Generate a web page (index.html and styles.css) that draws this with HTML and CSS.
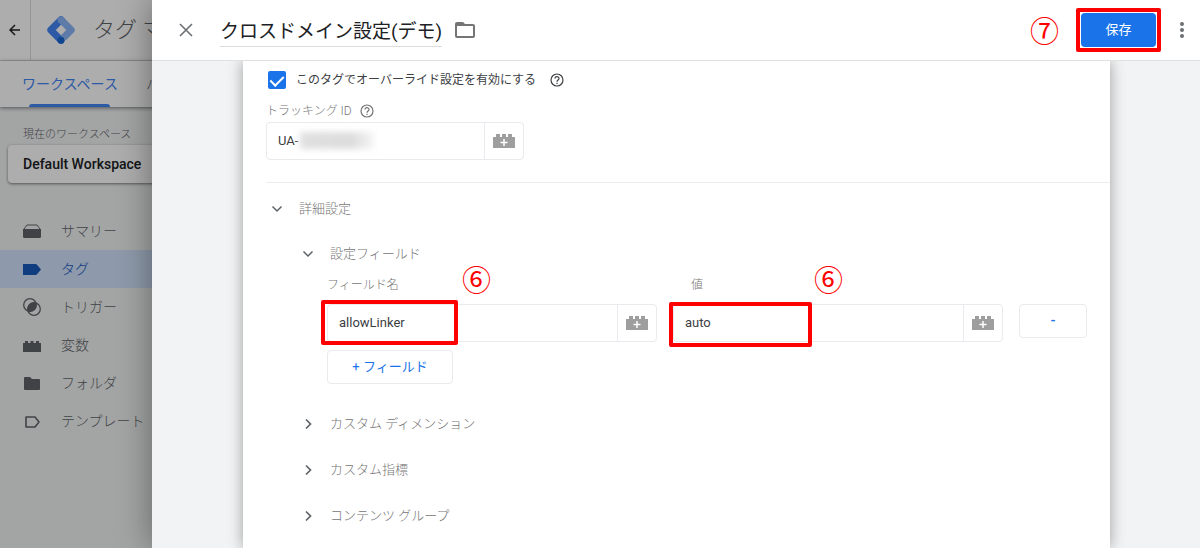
FILE: index.html
```html
<!DOCTYPE html>
<html lang="ja">
  <head>
    <meta charset="UTF-8" />
    <meta name="viewport" content="width=device-width, initial-scale=1.0" />
    <title>タグ マネージャー</title>
    <link rel="stylesheet" href="styles.css">
  </head>
  <body>
    <svg class="sprite" aria-hidden="true">
      <symbol id="brick" viewBox="0 0 22 14">
        <path fill="#9e9e9e" d="M0 3h3V0h4v3h2V0h4v3h2V0h4v3h3v11H0z" />
        <path fill="none" stroke="#fff" stroke-width="1.5" d="M11 5v7M7.500 8.500h7" />
      </symbol>
      <symbol id="help" viewBox="0 0 14 14">
        <circle cx="7" cy="7" r="6" fill="none" stroke="currentColor" stroke-width="1.200" />
        <path fill="none" stroke="currentColor" stroke-width="1.200" d="M5 5.600C5 3 9 3 9 5.500C9 7 7 7 7 8.700M7 9.700v1.300" />
      </symbol>
      <symbol id="down" viewBox="0 0 12 12">
        <path fill="none" stroke="#5f6368" stroke-width="1.500" d="M1.500 3.500L6 8L10.500 3.500" />
      </symbol>
      <symbol id="right" viewBox="0 0 12 12">
        <path fill="none" stroke="#5f6368" stroke-width="1.700" d="M4 1.500L8.500 6L4 10.500" />
      </symbol>
    </svg>

    <div class="app">
      <header class="app-header">
        <button class="back" aria-label="戻る">
          <svg width="12" height="12" viewBox="0 0 12 12"><path fill="none" stroke="#202124" stroke-width="1.500" d="M11 6H1.500M6 1L1 6l5 5" /></svg>
        </button>
        <svg class="logo" width="28" height="28" viewBox="0 0 28 28" fill="none" stroke-width="7" stroke-linecap="round" stroke-linejoin="round">
          <path stroke="#4285f4" d="M14 3.800L3.800 14L14 24.200" />
          <path stroke="#8ab4f8" d="M14 3.800L24.200 14L16.500 21.700" stroke-linecap="butt" />
          <circle cx="14" cy="3.800" r="3.500" fill="#8ab4f8" stroke="none" />
          <circle cx="14" cy="24.200" r="3.500" fill="#1967d2" stroke="none" />
        </svg>
        <span class="product">タグ マネージャー</span>
      </header>
      <nav class="tabs">
        <a class="tab active" href="#">ワークスペース</a>
        <a class="tab" href="#">バージョン</a>
      </nav>
      <aside class="sidebar">
        <p class="workspace-label">現在のワークスペース</p>
        <button class="workspace">Default Workspace</button>
        <nav class="menu">
          <a class="menu-item" href="#">
            <svg width="18" height="18" viewBox="0 0 18 18"><path d="M0 7h18v7.500q0 1.500-1.500 1.500h-15Q0 16 0 14.500z" /><path fill="none" stroke="#5f6368" d="M1 7l3-4h10l3 4" /></svg>
            サマリー
          </a>
          <a class="menu-item active" href="#">
            <svg width="18" height="18" viewBox="0 0 18 18"><path d="M0 4h12.500q1 0 1.500.700L18 9.500l-4 4.800q-.500.700-1.500.700H0z" /></svg>
            タグ
          </a>
          <a class="menu-item" href="#">
            <svg width="18" height="18" viewBox="0 0 18 18"><circle cx="7" cy="7" r="6.300" fill="none" stroke="#5f6368" stroke-width="1.300" /><circle cx="11" cy="11" r="6.300" fill="none" stroke="#5f6368" stroke-width="1.300" /><path d="M13.300 5.200A6.300 6.300 0 0 0 4.700 12.800A6.300 6.300 0 0 0 13.300 5.200z" /></svg>
            トリガー
          </a>
          <a class="menu-item" href="#">
            <svg width="18" height="18" viewBox="0 0 18 18"><path d="M0 7h2V5h3v2h2.500V5h3v2H13V5h3v2h2v9H0z" /></svg>
            変数
          </a>
          <a class="menu-item" href="#">
            <svg width="18" height="18" viewBox="0 0 18 18"><path d="M1 4q0-1 1-1h5l2 2h7q1 0 1 1v9q0 1-1 1H2q-1 0-1-1z" /></svg>
            フォルダ
          </a>
          <a class="menu-item" href="#">
            <svg width="18" height="18" viewBox="0 0 18 18"><path fill="none" stroke="#5f6368" stroke-width="1.600" stroke-linejoin="round" d="M3 5h9l4 5l-4 5H3z" /></svg>
            テンプレート
          </a>
        </nav>
      </aside>
    </div>
    <div class="scrim"></div>

    <section class="sheet">
      <header class="sheet-header">
        <button class="icon-button close" aria-label="閉じる">
          <svg width="14" height="14" viewBox="0 0 14 14"><path fill="none" stroke="#6b6f73" stroke-width="1.600" d="M1 1l12 12M13 1L1 13" /></svg>
        </button>
        <input class="title" type="text" aria-label="タグ名" value="クロスドメイン設定(デモ)" />
        <button class="icon-button" aria-label="フォルダ">
          <svg width="20" height="16" viewBox="0 0 20 16"><path fill="#757575" fill-rule="evenodd" d="M2 0h6l2 2h8q2 0 2 2v10q0 2-2 2H2q-2 0-2-2V2Q0 0 2 0zM2 4v10h16V4z" /></svg>
        </button>
        <span class="step step-save">⑦</span>
        <div class="callout-anchor">
          <button class="save">保存</button>
          <span class="callout callout-save"></span>
        </div>
        <button class="icon-button more" aria-label="その他">
          <svg width="4" height="16" viewBox="0 0 4 16" fill="#6b6f73"><circle cx="2" cy="2" r="2" /><circle cx="2" cy="8" r="2" /><circle cx="2" cy="14" r="2" /></svg>
        </button>
      </header>

      <div class="sheet-body">
        <main class="card">
          <div class="row override">
            <input class="check" type="checkbox" id="override" checked />
            <label for="override">このタグでオーバーライド設定を有効にする</label>
            <svg class="help" width="14" height="14"><use href="#help" /></svg>
          </div>
          <div class="row tracking-label">
            <label for="tracking">トラッキング ID</label>
            <svg class="help" width="14" height="14"><use href="#help" /></svg>
          </div>
          <div class="field tracking">
            <input type="text" id="tracking" value="UA-" />
            <span class="redacted"></span>
            <button aria-label="変数を選択"><svg width="22" height="14"><use href="#brick" /></svg></button>
          </div>

          <div class="advanced">
            <button class="row toggle" aria-expanded="true">
              <svg width="12" height="12"><use href="#down" /></svg>詳細設定
            </button>
            <div class="groups">
              <button class="row toggle" aria-expanded="true">
                <svg width="12" height="12"><use href="#down" /></svg>設定フィールド
              </button>
              <div class="fields">
                <div class="cell">
                  <label for="name">フィールド名</label>
                  <div class="field">
                    <input type="text" id="name" value="allowLinker" />
                    <button aria-label="変数を選択"><svg width="22" height="14"><use href="#brick" /></svg></button>
                  </div>
                  <span class="step step-name">⑥</span>
                  <span class="callout callout-name"></span>
                </div>
                <div class="cell">
                  <label class="value-label" for="value">値</label>
                  <div class="field">
                    <input type="text" id="value" value="auto" />
                    <button aria-label="変数を選択"><svg width="22" height="14"><use href="#brick" /></svg></button>
                  </div>
                  <span class="step step-value">⑥</span>
                  <span class="callout callout-value"></span>
                </div>
                <button class="outlined remove">-</button>
              </div>
              <button class="outlined add">+ フィールド</button>
              <div class="collapsed">
                <button class="row toggle" aria-expanded="false">
                  <svg width="12" height="12"><use href="#right" /></svg>カスタム ディメンション
                </button>
                <button class="row toggle" aria-expanded="false">
                  <svg width="12" height="12"><use href="#right" /></svg>カスタム指標
                </button>
                <button class="row toggle" aria-expanded="false">
                  <svg width="12" height="12"><use href="#right" /></svg>コンテンツ グループ
                </button>
              </div>
            </div>
          </div>
        </main>
      </div>
    </section>
  </body>
</html>
```

FILE: styles.css
```css
* {
  box-sizing: border-box;
}

body {
  margin: 0;
  height: 100vh;
  position: relative;
  overflow: hidden;
  font-family: Roboto, "Noto Sans CJK JP", sans-serif;
  font-size: 13px;
  font-weight: 300;
  line-height: 20px;
  color: #3c4043;
  background-color: #f1f3f4;
}

button,
input {
  font: inherit;
  color: inherit;
  margin: 0;
  padding: 0;
  border: none;
  background: none;
}

button {
  cursor: pointer;
}

a {
  color: inherit;
  text-decoration: none;
}

svg {
  display: block;
  flex: none;
}

.sprite {
  display: none;
}

/* page behind the sheet */
.app-header {
  display: flex;
  align-items: center;
  height: 61px;
  background-color: #fff;
  border-bottom: 1px solid #dadce0;
}

.back {
  display: flex;
  align-items: center;
  justify-content: center;
  align-self: stretch;
  width: 31px;
  border-right: 1px solid #dadce0;
}

.logo {
  margin-left: 16px;
}

.product {
  margin-left: 18px;
  font-size: 22px;
  line-height: 28px;
  color: #5f6368;
  white-space: nowrap;
}

.tabs {
  display: flex;
  gap: 28px;
  height: 46px;
  padding-left: 22px;
  position: relative;
  background-color: #fff;
  box-shadow: 0 1px 4px rgba(0, 0, 0, 0.5);
}

.tab {
  display: flex;
  align-items: center;
  position: relative;
  font-size: 14px;
  color: #5f6368;
  white-space: nowrap;
}

.tab.active {
  font-weight: 400;
  color: #4285f4;
}

.tab.active::after {
  content: "";
  position: absolute;
  left: 7px;
  right: 8px;
  bottom: 0;
  height: 3px;
  border-radius: 3px 3px 0 0;
  background-color: #4285f4;
}

.sidebar {
  width: 240px;
  padding-top: 18px;
}

.workspace-label {
  margin: 0;
  padding-left: 23px;
  font-size: 11px;
  color: #5f6368;
}

.workspace {
  display: block;
  width: 224px;
  height: 38px;
  margin-left: 8px;
  padding-left: 15px;
  border-radius: 4px;
  background-color: #fff;
  box-shadow: 0 1px 3px rgba(0, 0, 0, 0.5);
  font-size: 14px;
  font-weight: 500;
  text-align: left;
  color: #202124;
}

.menu {
  margin-top: 29px;
}

.menu-item {
  display: flex;
  align-items: center;
  gap: 20px;
  height: 38px;
  padding-left: 23px;
  font-size: 14px;
  color: #5f6368;
  fill: #5f6368;
}

.menu-item.active {
  color: #185abc;
  fill: #185abc;
  background-color: #d2e3fc;
}

.scrim {
  position: absolute;
  inset: 0;
  background-color: rgba(0, 0, 0, 0.32);
}

/* sheet */
.sheet {
  position: absolute;
  inset: 0 0 0 152px;
  display: flex;
  flex-direction: column;
  background-color: #f1f3f4;
  box-shadow: 0 0 32px rgba(0, 0, 0, 0.4);
}

.sheet-header {
  display: flex;
  align-items: center;
  height: 61px;
  padding: 0 16px 0 27px;
  background-color: #fff;
  border-bottom: 1px solid #e0e0e0;
}

.icon-button {
  display: flex;
}

.close {
  margin-right: 27px;
}

.title {
  width: 222px;
  height: 33px;
  margin-right: 13px;
  border-bottom: 1px solid #dadce0;
  font-size: 19px;
  font-weight: 400;
  color: #202124;
}

.callout-anchor {
  position: relative;
}

.save {
  display: block;
  width: 75px;
  height: 34px;
  border-radius: 4px;
  background-color: #1a73e8;
  font-weight: 400;
  color: #fff;
}

.more {
  margin-left: 24px;
}

.sheet-body {
  flex: 1;
  min-height: 0;
  padding: 0 90px 0 91px;
  overflow: hidden;
}

.card {
  min-height: 100%;
  padding: 8px 0 8px 23px;
  background-color: #fff;
  box-shadow: 0 0 14px rgba(0, 0, 0, 0.35);
}

.row {
  display: flex;
  align-items: center;
}

.override {
  height: 22px;
  padding-left: 2px;
  font-size: 12px;
  font-weight: 400;
}

.check {
  appearance: none;
  width: 18px;
  height: 18px;
  margin-right: 10px;
  border-radius: 2px;
  background-color: #1a73e8;
}

.check:checked::after {
  content: "";
  display: block;
  width: 6px;
  height: 11px;
  margin: 2px auto;
  border: solid #fff;
  border-width: 0 2px 2px 0;
  transform: rotate(45deg);
}

.help {
  margin-left: 8px;
}

.override .help {
  margin-left: 14px;
}

.tracking-label {
  margin-top: 10px;
  font-size: 12px;
  color: #757575;
}

.field {
  display: flex;
  position: relative;
  height: 38px;
  border: 1px solid #e8eaed;
  border-radius: 4px;
  background-color: #fff;
}

.field input {
  flex: 1;
  min-width: 0;
  padding-left: 11px;
  font-weight: 400;
}

.field button {
  display: flex;
  align-items: center;
  justify-content: center;
  width: 39px;
  border-left: 1px solid #e8eaed;
}

.tracking {
  width: 258px;
  margin-top: 1px;
}

.redacted {
  position: absolute;
  left: 33px;
  top: 9px;
  width: 74px;
  height: 17px;
  background: linear-gradient(90deg, #e0e0e0, #dcdcdc 70%, #f6f6f6);
  filter: blur(3px);
}

.advanced {
  margin-top: 22px;
  padding-top: 16px;
  border-top: 1px solid #ececec;
}

.toggle {
  gap: 16px;
  height: 20px;
  color: #757575;
  white-space: nowrap;
}

.advanced > .toggle {
  margin-left: 5px;
}

.groups {
  padding: 25px 23px 0 36px;
}

.fields {
  display: grid;
  grid-template-columns: 1fr 1fr 68px;
  gap: 16px;
  align-items: end;
  margin: 11px 0 8px 25px;
}

.cell {
  position: relative;
}

.cell label {
  display: block;
  margin-bottom: 9px;
  font-size: 12px;
  color: #757575;
}

.cell .value-label {
  padding-left: 18px;
}

.outlined {
  height: 34px;
  border: 1px solid #e8eaed;
  border-radius: 4px;
  font-weight: 400;
  color: #1a73e8;
}

.remove {
  margin-bottom: 4px;
  font-weight: 700;
}

.add {
  width: 126px;
  margin-left: 25px;
}

.collapsed {
  display: grid;
  gap: 26px;
  justify-items: start;
  margin-top: 30px;
}

/* numbered annotations */
.step {
  font-size: 29px;
  line-height: 30px;
  font-weight: 400;
  color: #f00;
}

.step-save {
  margin-left: auto;
  margin-right: 22px;
  padding-top: 3px;
}

.step-name,
.step-value {
  position: absolute;
  top: -9px;
}

.step-name {
  left: 135px;
}

.step-value {
  left: 141px;
}

.callout {
  position: absolute;
  border: 4px solid #f00;
  border-radius: 2px;
  pointer-events: none;
}

.callout-save {
  inset: -5px;
}

.callout-name {
  left: -6px;
  top: 25px;
  width: 137px;
  height: 45px;
}

.callout-value {
  left: -4px;
  top: 27px;
  width: 143px;
  height: 45px;
}
```
